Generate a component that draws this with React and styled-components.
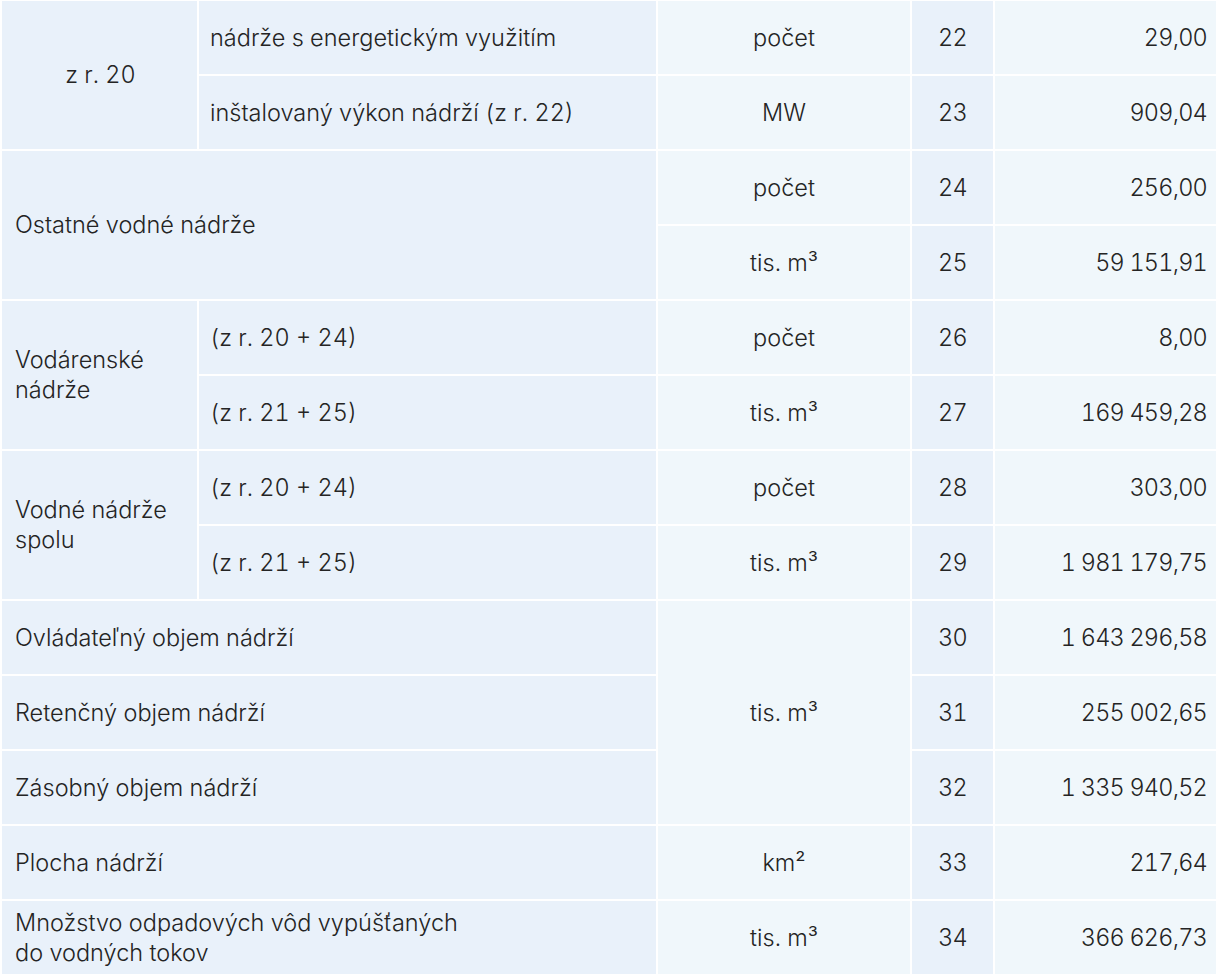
import React from 'react';
import styled, { createGlobalStyle } from 'styled-components';

const GlobalStyle = createGlobalStyle`
  html, body {
    margin: 0;
    padding: 0;
    background: #ffffff;
  }
  body {
    font-family: Inter, 'Liberation Sans', Arial, sans-serif;
    font-weight: 300;
    color: #242424;
  }
`;

const Table = styled.table`
  width: 1216px;
  table-layout: fixed;
  border-collapse: collapse;
  font-size: 23.5px;
  font-feature-settings: 'tnum' 1;
  margin-top: -1px;
`;

const Row = styled.tr`
  height: 75px;
`;

const Cell = styled.td`
  border: 2px solid #ffffff;
  padding: 0 ${(p) => (p.$align === 'right' ? '9px' : '11px')};
  background: ${(p) => (p.$light ? '#f0f7fb' : '#e9f1fa')};
  text-align: ${(p) => p.$align || 'left'};
  vertical-align: middle;
  line-height: 30px;
  white-space: nowrap;
`;

const Label = styled(Cell)`
  padding-left: 13px;
  white-space: normal;
`;

const Sub = styled(Cell)`
  padding-left: 11px;
`;

const Unit = styled(Cell).attrs({ $light: true, $align: 'center' })``;

const Num = styled(Cell).attrs({ $align: 'center' })`
  letter-spacing: -0.6px;
`;

const Value = styled(Cell).attrs({ $light: true, $align: 'right' })`
  letter-spacing: -0.8px;
`;

const rows = [
  { unit: 'počet', n: 22, v: '29,00' },
  { unit: 'MW', n: 23, v: '909,04' },
];

function App() {
  return (
    <>
      <GlobalStyle />
      <Table>
        <colgroup>
          <col style={{ width: 197 }} />
          <col style={{ width: 459 }} />
          <col style={{ width: 254 }} />
          <col style={{ width: 83 }} />
          <col style={{ width: 223 }} />
        </colgroup>
        <tbody>
          <Row>
            <Label rowSpan={2} $align="center">z r. 20</Label>
            <Sub>nádrže s energetickým využitím</Sub>
            <Unit>{rows[0].unit}</Unit>
            <Num>{rows[0].n}</Num>
            <Value>{rows[0].v}</Value>
          </Row>
          <Row>
            <Sub>inštalovaný výkon nádrží (z r. 22)</Sub>
            <Unit>{rows[1].unit}</Unit>
            <Num>{rows[1].n}</Num>
            <Value>{rows[1].v}</Value>
          </Row>
          <Row>
            <Label rowSpan={2} colSpan={2}>Ostatné vodné nádrže</Label>
            <Unit>počet</Unit>
            <Num>24</Num>
            <Value>256,00</Value>
          </Row>
          <Row>
            <Unit>tis. m³</Unit>
            <Num>25</Num>
            <Value>59 151,91</Value>
          </Row>
          <Row>
            <Label rowSpan={2}>Vodárenské nádrže</Label>
            <Sub>(z r. 20 + 24)</Sub>
            <Unit>počet</Unit>
            <Num>26</Num>
            <Value>8,00</Value>
          </Row>
          <Row>
            <Sub>(z r. 21 + 25)</Sub>
            <Unit>tis. m³</Unit>
            <Num>27</Num>
            <Value>169 459,28</Value>
          </Row>
          <Row>
            <Label rowSpan={2}>Vodné nádrže spolu</Label>
            <Sub>(z r. 20 + 24)</Sub>
            <Unit>počet</Unit>
            <Num>28</Num>
            <Value>303,00</Value>
          </Row>
          <Row>
            <Sub>(z r. 21 + 25)</Sub>
            <Unit>tis. m³</Unit>
            <Num>29</Num>
            <Value>1 981 179,75</Value>
          </Row>
          <Row>
            <Label colSpan={2}>Ovládateľný objem nádrží</Label>
            <Unit rowSpan={3}>tis. m³</Unit>
            <Num>30</Num>
            <Value>1 643 296,58</Value>
          </Row>
          <Row>
            <Label colSpan={2}>Retenčný objem nádrží</Label>
            <Num>31</Num>
            <Value>255 002,65</Value>
          </Row>
          <Row>
            <Label colSpan={2}>Zásobný objem nádrží</Label>
            <Num>32</Num>
            <Value>1 335 940,52</Value>
          </Row>
          <Row>
            <Label colSpan={2}>Plocha nádrží</Label>
            <Unit>km²</Unit>
            <Num>33</Num>
            <Value>217,64</Value>
          </Row>
          <Row>
            <Label colSpan={2}>
              Množstvo odpadových vôd vypúšťaných
              <br />
              do vodných tokov
            </Label>
            <Unit>tis. m³</Unit>
            <Num>34</Num>
            <Value>366 626,73</Value>
          </Row>
        </tbody>
      </Table>
    </>
  );
}

export default App;
